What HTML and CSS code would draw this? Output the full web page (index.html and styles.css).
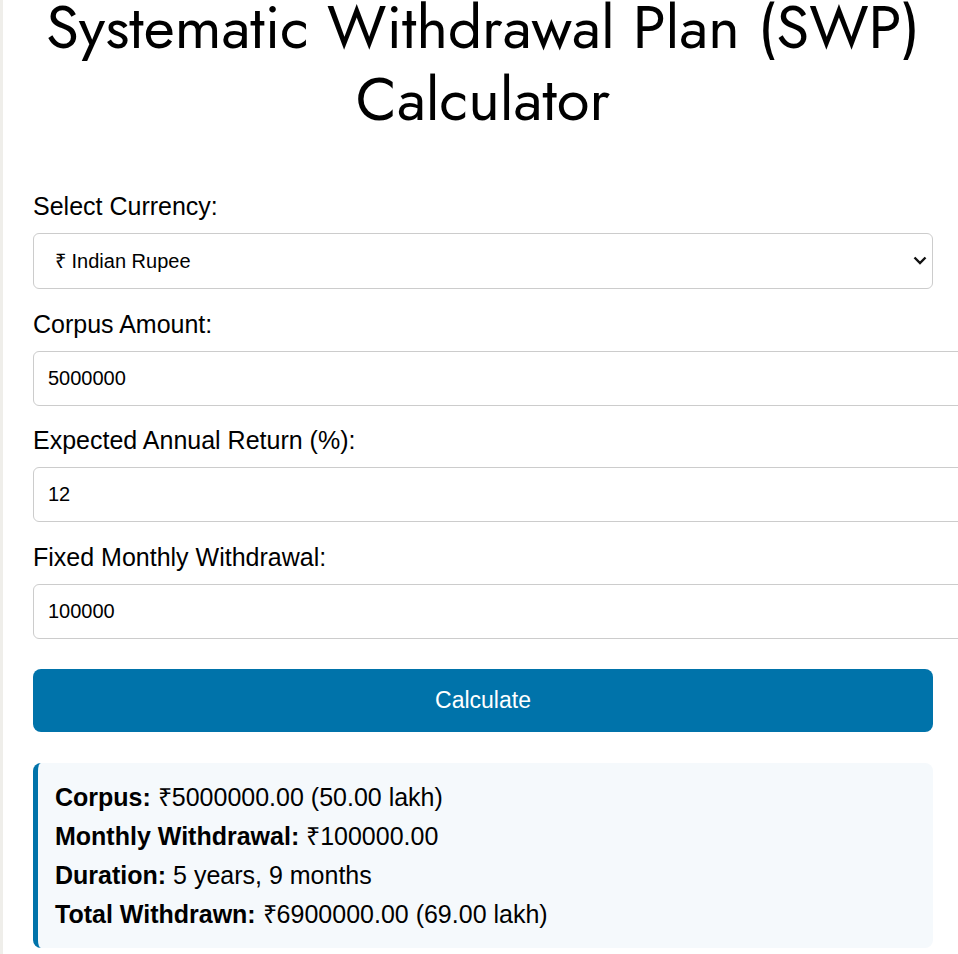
FILE: index.html
```html
<!DOCTYPE html>
<html lang="en">
  <head>
    <meta charset="utf-8" />
    <title>SWP Calculator</title>
    <link rel="stylesheet" href="styles.css">
  </head>
  <body>
    <div class="container">
      <h1>Systematic Withdrawal Plan (SWP) Calculator</h1>

      <div class="field">
        <label for="currency">Select Currency:</label>
        <div class="select-wrap">
          <select id="currency">
            <option value="INR" selected>₹ Indian Rupee</option>
            <option value="USD">$ US Dollar</option>
            <option value="EUR">€ Euro</option>
          </select>
          <svg class="chevron" width="14" height="9" viewBox="0 0 14 9">
            <path d="M1.5 1.5 L7 7 L12.5 1.5" fill="none" stroke="#111" stroke-width="2.4" />
          </svg>
        </div>
      </div>

      <div class="field">
        <label for="corpus">Corpus Amount:</label>
        <input type="text" id="corpus" value="5000000" />
      </div>

      <div class="field">
        <label for="rate">Expected Annual Return (%):</label>
        <input type="text" id="rate" value="12" />
      </div>

      <div class="field">
        <label for="withdrawal">Fixed Monthly Withdrawal:</label>
        <input type="text" id="withdrawal" value="100000" />
      </div>

      <button class="calc-btn" id="calc">Calculate</button>

      <div class="result" id="result">
        <div><strong>Corpus:</strong> ₹5000000.00 (50.00 lakh)</div>
        <div><strong>Monthly Withdrawal:</strong> ₹100000.00</div>
        <div><strong>Duration:</strong> 5 years, 9 months</div>
        <div><strong>Total Withdrawn:</strong> ₹6900000.00 (69.00 lakh)</div>
      </div>
    </div>
  </body>
</html>
```

FILE: styles.css
```css
html {
  overflow-x: hidden;
  background: #fff;
}
body {
  margin: 0;
  border-left: 3px solid #efeeea;
  font-family: 'Liberation Sans', Arial, sans-serif;
  color: #000;
  min-height: 954px;
}
.container {
  width: 900px;
  margin-left: 30px;
}
h1 {
  margin: -8px 0 56px 0;
  font-family: 'Jost', 'Lato', sans-serif;
  font-weight: 400;
  font-size: 60px;
  line-height: 72px;
  text-align: center;
  color: #000;
}
.field {
  margin-bottom: 20.67px;
}
label {
  display: block;
  font-size: 25px;
  line-height: 28px;
  margin-bottom: 13px;
}
.select-wrap {
  position: relative;
}
select,
input {
  display: block;
  border: 1px solid #ccc;
  border-radius: 6px;
  background: #fff;
  font-family: 'Liberation Sans', Arial, sans-serif;
  font-size: 20px;
  color: #000;
  outline: none;
}
select {
  width: 100%;
  height: 56px;
  padding: 0 30px 0 21px;
  -webkit-appearance: none;
  appearance: none;
}
input {
  box-sizing: content-box;
  width: 100%;
  height: 53px;
  padding: 0 15px 0 14px;
}
.chevron {
  position: absolute;
  right: 6px;
  top: 23px;
  pointer-events: none;
}
.calc-btn {
  display: block;
  width: 100%;
  height: 63px;
  margin: 30px 0 31px 0;
  border: 0;
  border-radius: 8px;
  background: #0073aa;
  color: #fff;
  font-family: 'Liberation Sans', Arial, sans-serif;
  font-size: 23px;
}
.result {
  padding: 15px 17px 14px 17px;
  border-left: 5px solid #0073aa;
  border-radius: 8px;
  background: #f5f9fc;
  font-size: 25px;
  line-height: 39px;
}
```
